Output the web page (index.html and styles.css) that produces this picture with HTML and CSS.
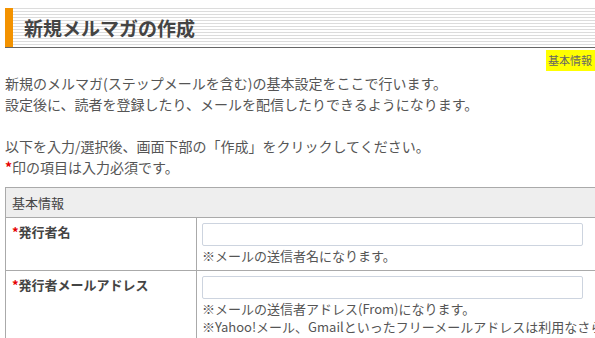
FILE: index.html
```html
<!DOCTYPE html>
<html lang="ja">
<head>
<meta charset="utf-8">
<title>新規メルマガの作成</title>
<link rel="stylesheet" href="styles.css">
</head>
<body>
<div class="page">
  <h1 class="title">新規メルマガの作成</h1>
  <div class="crumbs"><span class="badge">基本情報</span></div>
  <p class="intro">新規のメルマガ(ステップメールを含む)の基本設定をここで行います。<br>設定後に、読者を登録したり、メールを配信したりできるようになります。<br><br>以下を入力/選択後、画面下部の「作成」をクリックしてください。<br><span class="req">*</span>印の項目は入力必須です。</p>
  <table class="form">
    <tr><th colspan="2" class="section">基本情報</th></tr>
    <tr>
      <td class="label"><span class="req">*</span>発行者名</td>
      <td class="field"><input class="text" type="text"><div class="note">※メールの送信者名になります。</div></td>
    </tr>
    <tr>
      <td class="label"><span class="req">*</span>発行者メールアドレス</td>
      <td class="field"><input class="text" type="text"><div class="note">※メールの送信者アドレス(From)になります。</div><div class="note">※Yahoo!メール、Gmailといったフリーメールアドレスは利用なさらないでください。</div></td>
    </tr>
  </table>
</div>
</body>
</html>
```
FILE: styles.css
```css
html, body {
  margin: 0;
  padding: 0;
  overflow: hidden;
  background: #fff;
}
body {
  font-family: "Noto Sans CJK JP", "Noto Sans", sans-serif;
  color: #555;
}
.page {
  padding: 8px 0 0 5px;
}
.title {
  margin: 0;
  height: 39px;
  line-height: 39px;
  padding-left: 19px;
  font-size: 19px;
  font-weight: bold;
  color: #444;
  border-bottom: 1px solid #666;
  background:
    linear-gradient(#f39200, #f39200) left top / 8px 100% no-repeat,
    repeating-linear-gradient(to bottom, #dcdcdc 0, #dcdcdc 1px, #fff 1px, #fff 3px);
}
.crumbs {
  text-align: right;
  margin-top: 2px;
  height: 21px;
  line-height: 21px;
}
.badge {
  display: inline-block;
  vertical-align: top;
  background: #ffff00;
  font-size: 11px;
  line-height: 21px;
  height: 21px;
  padding: 0 3px 0 2px;
  color: #666;
}
.intro {
  margin: 2px 0 0;
  font-size: 14px;
  line-height: 21px;
  white-space: nowrap;
}
.req {
  color: #e60000;
  font-weight: bold;
}
.form {
  margin-top: 9px;
  border-collapse: collapse;
  width: 760px;
  font-size: 13px;
}
.form th, .form td {
  border: 1px solid #aaa;
  vertical-align: top;
  text-align: left;
}
.section {
  background: #eee;
  font-weight: normal;
  color: #444;
  padding: 5px 6px;
  line-height: 19px;
}
.label {
  width: 178px;
  padding: 5px 6px;
  line-height: 18px;
  font-weight: bold;
  color: #444;
}
.field {
  padding: 5px;
}
.text {
  display: block;
  box-sizing: border-box;
  width: 381px;
  height: 23px;
  margin: 0;
  border: 1px solid #cdd4df;
  border-radius: 2px;
  background: #fff;
}
.note {
  line-height: 18px;
  white-space: nowrap;
  margin-top: 1px;
}
.note + .note {
  margin-top: 0;
}
```
